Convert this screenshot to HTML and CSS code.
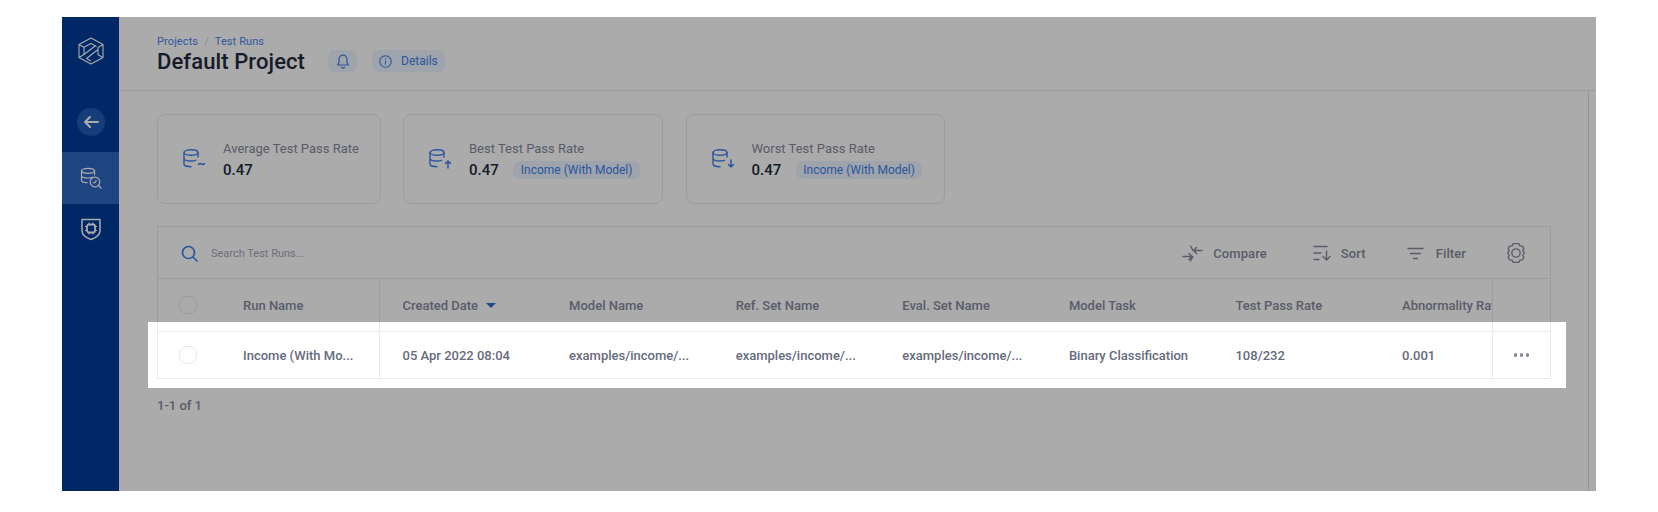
FILE: index.html
```html
<!DOCTYPE html>
<html lang="en">
<head>
<meta charset="utf-8">
<title>Test Runs</title>
<link rel="stylesheet" href="styles.css">
</head>
<body>
<div class="app">
  <aside class="sidebar">
    <div class="logo">
      <svg width="26" height="28" viewBox="0 0 26 28" fill="none" stroke="currentColor" stroke-width="1.100" stroke-linejoin="round"><path d="M13 1 25 7.500V20.500L13 27 1 20.500V7.500Z"/><path d="M1 7.500 6 10.300V17.500L1 20.500M6 10.300 13 6.500 18.500 9.500M6 17.500 17 9M8.500 21.500 20 12.500V17.700L25 20.500M20 12.500V10.500L25 7.500M8.500 21.500 13 24"/></svg>
    </div>
    <div class="back">
      <svg width="16" height="14" viewBox="0 0 16 14" fill="none" stroke="currentColor" stroke-width="2" stroke-linecap="round" stroke-linejoin="round"><path d="M15 7H2M7 2 2 7l5 5"/></svg>
    </div>
    <div class="nav-item active">
      <svg width="22" height="22" viewBox="0 0 22 22" fill="none" stroke="currentColor" stroke-width="1.200" stroke-linecap="round"><ellipse cx="8" cy="3.800" rx="6.500" ry="2.500"/><path d="M1.500 3.800v9.400c0 1.300 2.400 2.300 5.500 2.500M1.500 8.500c0 1.300 2.900 2.500 6.500 2.500 1.800 0 3.500-.3 4.600-.8M14.500 3.800v4"/><circle cx="15" cy="15" r="4.800"/><path d="M18.500 18.500 21 21M13.500 15.800l1.500-.3 1.200-1.800"/></svg>
    </div>
    <div class="nav-item">
      <svg width="22" height="24" viewBox="0 0 22 24" fill="none" stroke="currentColor" stroke-width="1.500" stroke-linejoin="round"><path d="M2 2.500h18v11c0 4.500-4.500 7.500-9 9-4.500-1.500-9-4.500-9-9Z"/><rect x="7" y="7.500" width="8" height="8" rx="2" stroke-width="1.800"/><path d="M9 5.500v2M13 5.500v2M9 15.500v2M13 15.500v2M5 9.500h2M5 13.500h2M15 9.500h2M15 13.500h2" stroke-width="1.100"/></svg>
    </div>
  </aside>
  <main class="main">
    <header class="topbar">
      <div class="titles">
        <div class="crumbs"><span>Projects</span><span class="sep">/</span><span>Test Runs</span></div>
        <h1>Default Project</h1>
      </div>
      <button class="pill icon-pill">
        <svg width="14" height="15" viewBox="0 0 14 15" fill="none" stroke="currentColor" stroke-width="1.200" stroke-linecap="round" stroke-linejoin="round"><path d="M7 1.200a4 4 0 0 0-4 4v3.300L1.500 11h11L11 8.500V5.200a4 4 0 0 0-4-4ZM5.300 13.300c.9.800 2.500.800 3.400 0"/></svg>
      </button>
      <button class="pill">
        <svg width="13" height="13" viewBox="0 0 13 13" fill="none" stroke="currentColor" stroke-width="1.100" stroke-linecap="round"><circle cx="6.500" cy="6.500" r="5.700"/><path d="M6.500 6v3.200M6.500 3.600v.3"/></svg>
        <span>Details</span>
      </button>
    </header>
    <div class="body">
      <div class="content">
        <section class="cards">
          <article class="card card-avg">
            <svg class="db" width="25" height="20" viewBox="0 0 25 20" fill="none" stroke="currentColor" stroke-width="1.400" stroke-linecap="round"><ellipse cx="8" cy="3.500" rx="7" ry="2.700"/><path d="M1 3.500v11.500c0 1.500 3.100 2.800 7 2.800M1 9.300c0 1.500 3.100 2.700 7 2.700 1.700 0 3.400-.3 4.600-.7M15 3.500v4.500"/><path d="M15.500 15.500c1-1.200 2-1.200 3-.5s2 .7 3-.5" stroke-width="1.600"/></svg>
            <div class="stat">
              <div class="stat-label">Average Test Pass Rate</div>
              <div class="stat-value"><b>0.47</b></div>
            </div>
          </article>
          <article class="card card-best">
            <svg class="db" width="25" height="20" viewBox="0 0 25 20" fill="none" stroke="currentColor" stroke-width="1.400" stroke-linecap="round" stroke-linejoin="round"><ellipse cx="8" cy="3.500" rx="7" ry="2.700"/><path d="M1 3.500v11.500c0 1.500 3.100 2.800 7 2.800M1 9.300c0 1.500 3.100 2.700 7 2.700 1.700 0 3.400-.3 4.600-.7M15 3.500v4.500"/><path d="M19 19v-7M16.500 14.500 19 12l2.500 2.500" stroke-width="1.500"/></svg>
            <div class="stat">
              <div class="stat-label">Best Test Pass Rate</div>
              <div class="stat-value"><b>0.47</b><span class="tag">Income (With Model)</span></div>
            </div>
          </article>
          <article class="card card-worst">
            <svg class="db" width="25" height="20" viewBox="0 0 25 20" fill="none" stroke="currentColor" stroke-width="1.400" stroke-linecap="round" stroke-linejoin="round"><ellipse cx="8" cy="3.500" rx="7" ry="2.700"/><path d="M1 3.500v11.500c0 1.500 3.100 2.800 7 2.800M1 9.300c0 1.500 3.100 2.700 7 2.700 1.700 0 3.400-.3 4.600-.7M15 3.500v4.500"/><path d="M19 11v7M16.500 15.500 19 18l2.500-2.500" stroke-width="1.500"/></svg>
            <div class="stat">
              <div class="stat-label">Worst Test Pass Rate</div>
              <div class="stat-value"><b>0.47</b><span class="tag">Income (With Model)</span></div>
            </div>
          </article>
        </section>
        <section class="table">
          <div class="toolbar">
            <svg class="search-icon" width="17" height="17" viewBox="0 0 17 17" fill="none" stroke="currentColor" stroke-width="1.700" stroke-linecap="round"><circle cx="7.500" cy="7.500" r="6"/><path d="m12 12 4 4"/></svg>
            <span class="search">Search Test Runs...</span>
            <div class="actions">
              <span class="action act-compare">
                <svg width="21" height="17" viewBox="0 0 21 17" fill="none" stroke="currentColor" stroke-width="1.400" stroke-linecap="round" stroke-linejoin="round"><path d="M1 11.500h9M7 8.500l3 3-3 3M20 5.500h-8.500M14.500 2.500l-3 3 3 3M8.500 16l2.500-4.500M11 5.500 8.500 1"/></svg>
                Compare
              </span>
              <span class="action act-sort">
                <svg width="18" height="16" viewBox="0 0 18 16" fill="none" stroke="currentColor" stroke-width="1.400" stroke-linecap="round" stroke-linejoin="round"><path d="M1 1.500h13M1 8h7M1 14.500h5M13.500 6v9M10 11.500l3.500 3.500 3.500-3.500"/></svg>
                Sort
              </span>
              <span class="action act-filter">
                <svg width="17" height="13" viewBox="0 0 17 13" fill="none" stroke="currentColor" stroke-width="1.400" stroke-linecap="round"><path d="M1 1.500h15M3.500 6.500h10M6.500 11.500h4"/></svg>
                Filter
              </span>
              <svg class="gear" width="22" height="22" viewBox="0 0 21 21" fill="none" stroke="currentColor" stroke-width="1.300" stroke-linejoin="round"><path d="M7.800 1.500h5.400l1 2.200 2.400.3 1.400 2-1 2.200 1.500 2.300-1.500 2.300 1 2.200-1.400 2-2.400.3-1 2.200H7.800l-1-2.200-2.400-.3-1.400-2 1-2.200L2.500 10.500 4 8.200 3 6l1.400-2 2.400-.3Z"/><circle cx="10.500" cy="10.500" r="4"/></svg>
            </div>
          </div>
          <div class="row head">
            <div class="cell frozen"><span class="check"></span><span class="name">Run Name</span></div>
            <div class="cell">Created Date<i class="caret"></i></div>
            <div class="cell">Model Name</div>
            <div class="cell">Ref. Set Name</div>
            <div class="cell">Eval. Set Name</div>
            <div class="cell">Model Task</div>
            <div class="cell">Test Pass Rate</div>
            <div class="cell">Abnormality Rate</div>
            <div class="cell end"></div>
          </div>
          <div class="row data">
            <div class="cell frozen"><span class="check"></span><span class="name">Income (With Mo...</span></div>
            <div class="cell">05 Apr 2022 08:04</div>
            <div class="cell">examples/income/...</div>
            <div class="cell">examples/income/...</div>
            <div class="cell">examples/income/...</div>
            <div class="cell">Binary Classification</div>
            <div class="cell">108/232</div>
            <div class="cell">0.001</div>
            <div class="cell end"><span class="dots"><i></i><i></i><i></i></span></div>
          </div>
        </section>
        <div class="pager">1-1 of 1</div>
      </div>
      <div class="scroll-strip"></div>
    </div>
  </main>
  <div class="spotlight"></div>
</div>
</body>
</html>
```
FILE: styles.css
```css
* { box-sizing: border-box; }
html, body { margin: 0; background: #fff; }
body { padding: 17px 62px 21px; font-family: Roboto, "Liberation Sans", sans-serif; }

.app { position: relative; display: flex; width: 1534px; height: 474px; overflow: hidden; background: #fff; }

.sidebar { flex: 0 0 57px; background: #003d99; color: #fff; display: flex; flex-direction: column; align-items: center; }
.logo { height: 68px; padding-top: 20px; display: flex; justify-content: center; }
.back { width: 28px; height: 28px; margin-top: 23px; margin-bottom: 16px; border-radius: 50%; background: #1f5bb5; display: flex; align-items: center; justify-content: center; }
.nav-item { width: 100%; height: 52px; display: flex; align-items: center; justify-content: center; }
.nav-item.active { background: #2e68c0; }
.nav-item:last-child { height: 50px; }

.main { flex: 1; min-width: 0; display: flex; flex-direction: column; }
.topbar { height: 74px; flex: none; border-bottom: 1px solid #e9eaf2; padding-left: 38px; display: flex; align-items: flex-start; }
.titles { padding-top: 18px; margin-right: 23px; }
.crumbs { font-size: 11px; line-height: 14px; color: #4a86ee; display: flex; gap: 6px; letter-spacing: .1px; }
.sep { color: #d3d6de; }
h1 { margin: -1px 0 0; font-size: 22px; line-height: 28px; font-weight: 500; color: #232b3d; letter-spacing: .1px; }
.pill { border: 0; height: 22px; margin-top: 33px; margin-right: 15px; padding: 0 7px; border-radius: 7px; background: #edf4ff; color: #3d82ee; font: 400 12px Roboto, sans-serif; display: flex; align-items: center; gap: 9px; }
.icon-pill { width: 29px; justify-content: center; padding: 0; }

.body { flex: 1; min-height: 0; display: flex; }
.content { flex: 1; min-width: 0; padding: 23px 37px 0 38px; }
.scroll-strip { flex: 0 0 8px; border-left: 1px solid #dcdde4; }

.cards { display: flex; gap: 22.500px; }
.card { height: 90px; border: 1px solid #e9eaf2; border-radius: 8px; display: flex; align-items: center; padding-left: 25px; color: #3d82ee; }
.card-avg { width: 223.500px; }
.card-best { width: 260px; }
.card-worst { width: 259px; }
.db { flex: none; margin-right: 15px; }
.stat-label { font-size: 13px; line-height: 18px; color: #868a9e; }
.stat-value { display: flex; align-items: center; margin-top: 3px; height: 18px; }
.stat-value b { font-size: 15px; font-weight: 500; color: #232b3d; margin-right: 14.500px; }
.tag { height: 18px; padding: 0 7.500px; border-radius: 7px; background: #edf4ff; color: #3d82ee; font-size: 12px; line-height: 18px; white-space: nowrap; }

.table { margin-top: 22px; border: 1px solid #e9eaf2; }
.toolbar { height: 52px; padding: 1px 0 0 23px; display: flex; align-items: center; border-bottom: 1px solid #e9eaf2; }
.search-icon { color: #3d82ee; flex: none; margin-right: 13px; }
.search { font-size: 11px; color: #a5a8b8; }
.actions { margin-left: auto; display: flex; align-items: center; padding-right: 23px; color: #868a9e; font-size: 13px; font-weight: 500; letter-spacing: .1px; }
.action { display: flex; align-items: center; gap: 10px; }
.act-compare { margin-right: 46px; }
.act-sort { margin-right: 41px; }
.act-filter { margin-right: 39px; gap: 12px; }
.gear { display: block; }

.row { display: grid; grid-template-columns: 222px repeat(6, 166.600px) minmax(0, 1fr) 58px; font-size: 13px; font-weight: 500; }
.row.head { height: 53px; border-bottom: 1px solid #e9eaf2; }
.row.data { height: 46px; }
.cell { display: flex; align-items: center; padding-left: 22.500px; overflow: hidden; white-space: nowrap; color: #868a9e; }
.row.data .cell { color: #666b7d; }
.frozen { padding-left: 21px; border-right: 1px solid #e9eaf2; }
.end { padding: 0; justify-content: center; border-left: 1px solid #e9eaf2; }
.check { flex: none; width: 18px; height: 18px; border: 1.500px solid #e4e7f2; border-radius: 8px; margin-right: 46px; }
.caret { width: 0; height: 0; margin-left: 8px; border: 5px solid transparent; border-top: 5px solid #2b6ee0; border-bottom: 0; }
.dots { display: flex; gap: 2.500px; }
.dots i { width: 3.500px; height: 3.500px; border-radius: 50%; background: #7f8698; }

.pager { margin-top: 19px; font-size: 13px; font-weight: 500; color: #868a9e; }

.spotlight { position: absolute; left: 86px; top: 305px; width: 1418px; height: 66px; box-shadow: 0 0 0 2000px rgba(0, 0, 0, .33); }
```
